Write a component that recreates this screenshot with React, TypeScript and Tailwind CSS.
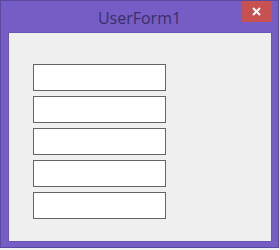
import React from 'react';

const App: React.FC = () => {
  return (
    <div className="w-[280px] h-[250px] bg-[#f0f0f0]" style={{ fontFamily: '"Open Sans", "Noto Sans", sans-serif' }}>
      <div className="w-[279px] h-[248px] border border-[#5a4a9f] bg-[#765dc6] flex flex-col">
        {/* title bar */}
        <div className="relative h-[31px] shrink-0 flex items-center justify-center">
          <span className="text-[16px] text-[#3a2f66] leading-none pt-[2px]">UserForm1</span>
          <div className="absolute right-[6px] top-0 w-[31px] h-[21px] bg-[#c75050] flex items-center justify-center">
            <svg width="9" height="9" viewBox="0 0 9 9">
              <path d="M1 1 L8 8 M8 1 L1 8" stroke="#ffffff" strokeWidth="2" />
            </svg>
          </div>
        </div>

        {/* client area */}
        <div className="ml-[7px] mr-[6px] h-[210px] bg-[#efefef] border border-[#6a55b5] pt-[31px] pl-[24px] flex flex-col gap-[5px]">
          {[0, 1, 2, 3, 4].map((i) => (
            <div key={i} className="w-[133px] h-[27px] bg-white border border-[#646464]" />
          ))}
        </div>
      </div>
    </div>
  );
};

export default App;
